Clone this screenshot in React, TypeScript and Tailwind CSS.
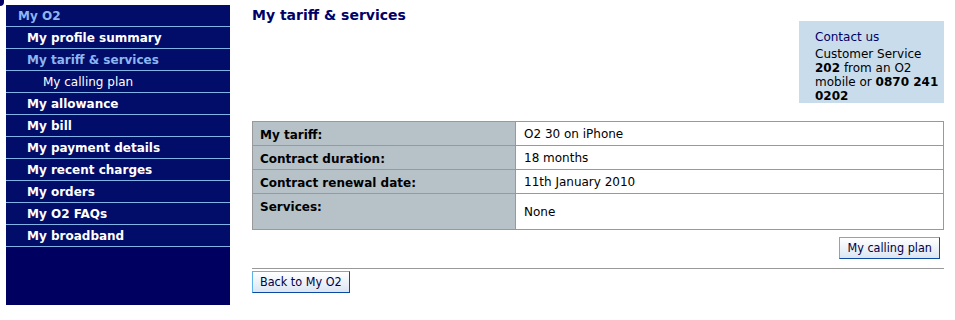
const navItems = [
  { label: "My O2", level: 0, active: true },
  { label: "My profile summary", level: 1 },
  { label: "My tariff & services", level: 1, active: true },
  { label: "My calling plan", level: 2 },
  { label: "My allowance", level: 1 },
  { label: "My bill", level: 1 },
  { label: "My payment details", level: 1 },
  { label: "My recent charges", level: 1 },
  { label: "My orders", level: 1 },
  { label: "My O2 FAQs", level: 1 },
  { label: "My broadband", level: 1 },
];

const rows = [
  { label: "My tariff:", value: "O2 30 on iPhone" },
  { label: "Contract duration:", value: "18 months" },
  { label: "Contract renewal date:", value: "11th January 2010" },
  { label: "Services:", value: "None", tall: true },
];

function O2Button({ children }: { children: React.ReactNode }) {
  return (
    <button className="h-[22px] border border-t-[#5cb3ea] border-l-[#5cb3ea] border-r-[#0b4aa3] border-b-[#0b4aa3] bg-gradient-to-b from-white to-[#dbe6f3] px-[7px] text-[12.5px] leading-[20px] text-[#000044] [font-family:'DejaVu_Sans_Condensed','DejaVu_Sans',sans-serif]">
      {children}
    </button>
  );
}

export default function App() {
  return (
    <div className="relative flex h-[320px] w-[955px] bg-white pl-[6px] pt-[5px] [font-family:'DejaVu_Sans',Verdana,sans-serif]">
      <div className="absolute left-0 top-0 h-[6px] w-[4px] rounded-br-[4px] bg-[#000066]" />

      <nav className="flex h-[300px] w-[224px] shrink-0 flex-col bg-[#000060]">
        {navItems.map((item) => (
          <div
            key={item.label}
            className={
              "h-[22px] border-b border-[#80b4e8] bg-[#020c69] pt-[1px] text-[12px] leading-[21px] " +
              (item.level === 0 ? "pl-[12px] " : item.level === 1 ? "pl-[21px] " : "pl-[37px] ") +
              (item.level === 2 ? "font-normal " : "font-bold ") +
              (item.active ? "text-[#8cb6f2]" : "text-white")
            }
          >
            {item.label}
          </div>
        ))}
      </nav>

      <main className="ml-[22px] flex w-[692px] flex-col">
        <div className="flex items-start justify-between">
          <h1 className="mt-[0px] text-[14px] font-bold leading-[20px] text-[#000066]">
            My tariff &amp; services
          </h1>
          <div className="mt-[16px] h-[82px] w-[145px] bg-[#c9dcec] pl-[16px] pr-0 pt-[9px] text-[12px] leading-[14px] text-black">
            <p className="text-[#000066]">Contact us</p>
            <p className="mt-[3px]">
              Customer Service <b>202</b> from an O2 mobile or <b>0870 241 0202</b>
            </p>
          </div>
        </div>

        <table className="mt-[18px] w-full border-collapse border border-[#999999] text-[12px] text-black">
          <tbody>
            {rows.map((r) => (
              <tr key={r.label} className={r.tall ? "h-[36px]" : "h-[24px]"}>
                <td className="w-[263px] border border-[#999999] bg-[#b6c1c8] px-[7px] align-top pt-[4px] font-bold">
                  {r.label}
                </td>
                <td className="border border-[#999999] px-[8px] align-middle">{r.value}</td>
              </tr>
            ))}
          </tbody>
        </table>

        <div className="mt-[7px] flex justify-end pr-[4px]">
          <O2Button>My calling plan</O2Button>
        </div>
        <div className="mt-[9px] border-t border-[#999999]">
          <O2Button>Back to My O2</O2Button>
        </div>
      </main>
    </div>
  );
}
